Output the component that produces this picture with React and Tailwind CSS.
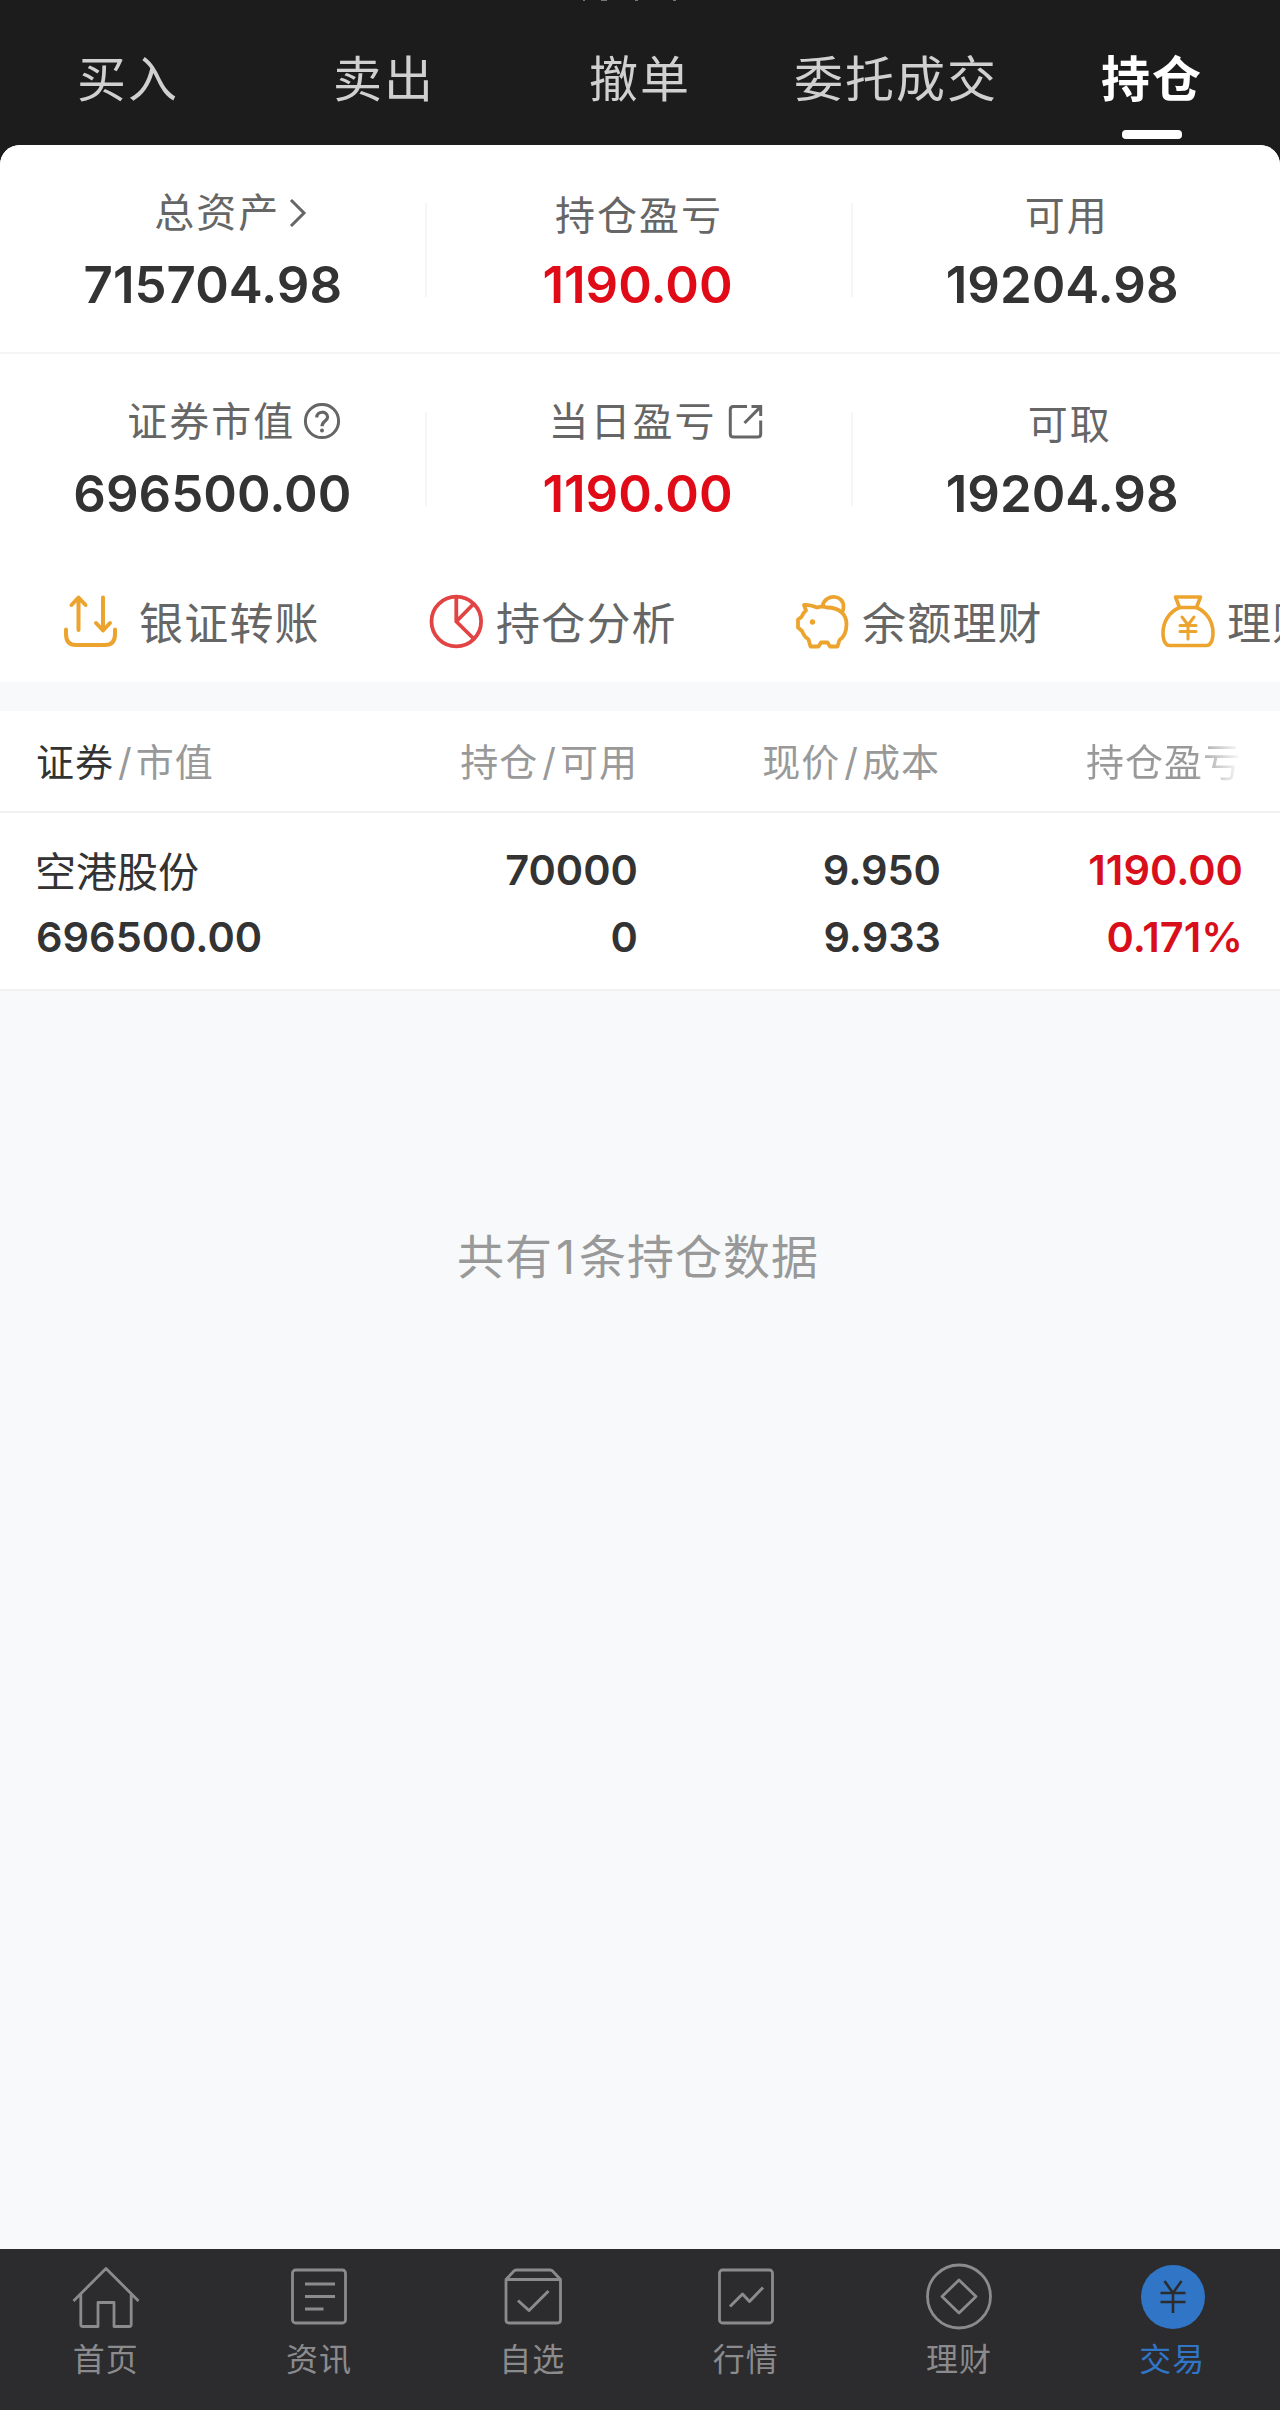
import { useState } from "react";

const tabs = ["买入", "卖出", "撤单", "委托成交", "持仓"];

const summary = [
  [
    { label: "总资产", value: "715704.98", icon: "chevron", labelPos: "mt-[38px] pl-[37px]", valuePos: "mt-[12px] pl-[1px]" },
    { label: "持仓盈亏", value: "1190.00", red: true, labelPos: "mt-[41px]", valuePos: "mt-[9px] pr-[3px]" },
    { label: "可用", value: "19204.98", labelPos: "mt-[41px]", valuePos: "mt-[9px] pr-[9px]" },
  ],
  [
    { label: "证券市值", value: "696500.00", icon: "help", labelPos: "mt-[38px] pl-[44px]", valuePos: "mt-[12px]" },
    { label: "当日盈亏", value: "1190.00", red: true, icon: "share", labelPos: "mt-[38px] pl-[34px]", valuePos: "mt-[12px] pr-[3px]" },
    { label: "可取", value: "19204.98", labelPos: "mt-[41px] pl-[6px]", valuePos: "mt-[9px] pr-[9px]" },
  ],
];

const holdings = [
  {
    name: "空港股份",
    marketValue: "696500.00",
    amount: "70000",
    available: "0",
    price: "9.950",
    cost: "9.933",
    profit: "1190.00",
    rate: "0.171%",
  },
];

function LabelIcon({ type }) {
  if (type === "chevron") {
    return (
      <svg className="ml-[9px] h-[30px] w-[18px]" viewBox="0 0 18 30" fill="none" stroke="#666" strokeWidth="3">
        <path d="M2 2 L15 15 L2 28" />
      </svg>
    );
  }
  if (type === "help") {
    return (
      <svg className="ml-[8px] size-[38px]" viewBox="0 0 38 38" fill="none" stroke="#666" strokeWidth="3">
        <circle cx="19" cy="18" r="16.6" />
        <path d="M13.8 14.5 C13.8 7.5 24.6 7.6 24.6 14 C24.6 18 19 18 19 23.2" strokeWidth="3.2" />
        <circle cx="19" cy="27.5" r="2" fill="#666" stroke="none" />
      </svg>
    );
  }
  if (type === "share") {
    return (
      <svg className="ml-[11px] size-[36px]" viewBox="0 0 36 36" fill="none" stroke="#666" strokeWidth="3">
        <path d="M20 2.5 H6.500 Q3.3 2.5 3.3 5.5 V30 Q3.3 33 6.500 33 H30.500 Q33.7 33 33.7 30 V16.500" />
        <path d="M17.500 19 L33 3.400 M24.500 2.500 H33.700 V12" />
      </svg>
    );
  }
  return null;
}

function TransferIcon() {
  return (
    <svg className="size-[56px]" viewBox="0 0 56 56" fill="none" stroke="#eca42f" strokeWidth="4" strokeLinecap="round" strokeLinejoin="round">
      <path d="M16.500 37 V5 M9.500 12 L16.500 4.500 L23.500 12" />
      <path d="M41 4.500 V37 M34 30 L41 37.500 L48 30" />
      <path d="M4 36.500 V41 Q4 52 14 52 H43 Q53 52 53 41 V36.500" />
    </svg>
  );
}

function PieIcon() {
  return (
    <svg className="size-[56px]" viewBox="0 0 56 56" fill="none" stroke="#e24444" strokeWidth="3.800">
      <circle cx="28.300" cy="28.500" r="24.800" />
      <path d="M28.300 3.500 V28.500 L46 46 M28.300 28.500 L45.500 11" />
    </svg>
  );
}

function PigIcon() {
  return (
    <svg className="size-[56px]" viewBox="0 0 56 56" fill="none" stroke="#eca42f" strokeWidth="3.800" strokeLinejoin="round">
      <path d="M10 12 C15 11.500 19 13 23 14.500 C26 13.500 30 13.500 33 14.500 C45 14.500 52.500 21 52.500 31 C52.500 39 50 44 45.500 47 L43.500 53.500 H36 L33.500 49.500 H27 L24.500 53.500 H16.500 L14.500 46.500 C11 44 9 41 8 38 L4 34.500 V26.500 L7.500 24 C8.500 21 10 19 12 17.500 Z" />
      <path d="M28.500 13 C31 0.500 50 1 49.500 14 C49.500 16 49 18 48 20" />
      <circle cx="18.500" cy="29" r="2.700" fill="#eca42f" stroke="none" />
    </svg>
  );
}

function MoneyBagIcon() {
  return (
    <svg className="size-[56px]" viewBox="0 0 56 56" fill="none" stroke="#eca42f" strokeWidth="3.600" strokeLinejoin="round" strokeLinecap="round">
      <path d="M15.500 4 H40.500 L36.500 14.500 H19.500 Z" />
      <path d="M19.500 14.500 C9 19 3 29 3 40 C3 46 4 49 6.500 51.500 Q8 52.500 10 52.500 H46 Q48 52.500 49.500 51.500 C52 49 53 46 53 40 C53 29 47 19 36.500 14.500" />
      <path d="M22 24 L28 32 L34 24 M28 32 V46 M20 32.500 H36 M20 38.500 H36" strokeWidth="3" />
    </svg>
  );
}

const actions = [
  { label: "银证转账", Icon: TransferIcon, gap: "gap-[21px]" },
  { label: "持仓分析", Icon: PieIcon, gap: "gap-[12px]" },
  { label: "余额理财", Icon: PigIcon, gap: "gap-[12px]" },
  { label: "理财产品", Icon: MoneyBagIcon, gap: "gap-[11px]" },
];

function NavIcon({ type }) {
  if (type === "trade") {
    return (
      <svg className="size-[68px]" viewBox="0 0 68 68" fill="none" stroke="#2c2c2e" strokeWidth="2.600">
        <circle cx="34" cy="34" r="32" fill="#3075c6" stroke="none" />
        <path d="M25.500 18 L34 30 L42.500 18 M34 30 V50 M21.500 30 H46.500 M21.500 39 H46.500" />
      </svg>
    );
  }
  return (
    <svg className="size-[68px]" viewBox="0 0 68 68" fill="none" stroke="#8b8b8d" strokeWidth="2.800" strokeLinejoin="round">
      {type === "home" && (
        <path d="M1.500 38 L34 5.500 L66.500 38 M8.800 31 V61.500 Q8.800 63.500 10.800 63.500 H26 V39.500 H42 V63.500 H57.200 Q59.200 63.500 59.200 61.500 V31" />
      )}
      {type === "news" && (
        <>
          <rect x="7.500" y="7" width="53" height="53" rx="3" />
          <path d="M20 21 H50 M20 33.500 H50 M20 46 H38.500" strokeWidth="3" />
        </>
      )}
      {type === "picks" && (
        <>
          <path d="M7 16.500 L14.500 8.500 Q15.500 7 17.500 7 H51 Q53 7 54 8.500 L61.500 16.500 V57 Q61.500 60 58.500 60 H10 Q7 60 7 57 Z M7 16.500 H61.500" />
          <path d="M19 37.500 L30 47.500 L49.500 28" strokeWidth="3" />
        </>
      )}
      {type === "market" && (
        <>
          <rect x="7.500" y="7" width="53" height="53" rx="3" />
          <path d="M18 43.500 L30.500 31 L37.500 38.500 L51 24.500" strokeWidth="3" />
        </>
      )}
      {type === "wealth" && (
        <>
          <circle cx="34" cy="33.500" r="31.500" />
          <path d="M34 17 L51 33.500 L34 50 L17 33.500 Z" />
        </>
      )}
    </svg>
  );
}

const navItems = [
  { label: "首页", type: "home" },
  { label: "资讯", type: "news" },
  { label: "自选", type: "picks" },
  { label: "行情", type: "market" },
  { label: "理财", type: "wealth" },
  { label: "交易", type: "trade" },
];

function Slash() {
  return <span className="mr-[3px] ml-[4px]">/</span>;
}

export default function App() {
  const [activeTab, setActiveTab] = useState("持仓");
  const [activeNav, setActiveNav] = useState("trade");

  return (
    <div className="flex h-[2410px] w-[1280px] flex-col overflow-hidden bg-[#f7f9fb] font-['Inter','Noto_Sans_CJK_SC',sans-serif] text-[#333]">
      <header className="relative bg-[#1c1c1c]">
        {/* bottom edge of the title bar scrolled off the top */}
        <svg className="absolute top-0 left-[580px] h-[2px] w-[100px]" viewBox="0 0 100 2" fill="#777">
          <path d="M3 0 h2 v1 h-2 Z M21 0 h6 v1 h-6 Z M55 0 h3 v1 h-3 Z M93 0 h3 v1 h-3 Z" />
        </svg>
        <nav className="grid h-[145px] grid-cols-5">
          {tabs.map((tab) => (
            <button
              key={tab}
              onClick={() => setActiveTab(tab)}
              className={`flex flex-col items-center pt-[45px] text-[49px] leading-[70px] tracking-[2px] ${
                activeTab === tab ? "font-semibold text-white" : "text-[#d0d0d0]"
              }`}
            >
              {tab}
              {activeTab === tab && <span className="mt-[15px] h-[9px] w-[60px] rounded-[4px] bg-white" />}
            </button>
          ))}
        </nav>
        <div className="h-[20px] rounded-t-[20px] bg-white" />
      </header>

      <section className="relative -mt-[20px] shrink-0 rounded-t-[20px] bg-white">
        {summary.map((row, i) => (
          <div key={i} className={`grid grid-cols-3 ${i === 0 ? "h-[209px] border-b-2 border-[#f5f5f5]" : "h-[206px]"}`}>
            {row.map((item, j) => (
              <div key={item.label} className="flex items-start">
                <div className="flex flex-1 flex-col items-center">
                  <div className={`flex h-[60px] items-center text-[40px] leading-[60px] tracking-[2px] text-[#666] ${item.labelPos}`}>
                    <span>{item.label}</span>
                    <LabelIcon type={item.icon} />
                  </div>
                  <div
                    className={`flex h-[60px] items-center text-[51px] font-semibold ${item.valuePos} ${
                      item.red ? "text-[#e10b17]" : "text-[#333]"
                    }`}
                  >
                    {item.value}
                  </div>
                </div>
                {j < 2 && <div className="mt-[58px] h-[94px] w-[2px] bg-[#f6f6f6]" />}
              </div>
            ))}
          </div>
        ))}
      </section>

      <section className="flex h-[122px] shrink-0 items-start overflow-hidden bg-white pt-[33px] pl-[62px]">
        {actions.map(({ label, Icon, gap }) => (
          <button key={label} className={`flex w-[366px] shrink-0 items-center ${gap}`}>
            <Icon />
            <span className="mt-[3px] -mb-[3px] text-[44px] leading-[56px] tracking-[1.200px] whitespace-nowrap text-[#666]">
              {label}
            </span>
          </button>
        ))}
      </section>

      <section className="mt-[29px] shrink-0 border-b-2 border-[#f2f2f2] bg-white">
        <div className="grid h-[102px] grid-cols-[338px_300px_302px_302px] items-center border-b-2 border-[#f2f2f2] pt-[2px] text-[38px] tracking-[1px] text-[#999]">
          <div className="pl-[36px]">
            <span className="text-[#333]">证券</span>
            <Slash />
            市值
          </div>
          <div className="text-right">
            持仓
            <Slash />
            可用
          </div>
          <div className="text-right">
            现价
            <Slash />
            成本
          </div>
          <div className="bg-linear-to-r from-[#999] from-84% to-white to-100% bg-clip-text text-right text-transparent">
            持仓盈亏
          </div>
        </div>
        {holdings.map((h) => (
          <div
            key={h.name}
            className="grid h-[176px] grid-cols-[338px_300px_303px_302px] pt-[24px] text-[41.500px] leading-[67px] font-semibold"
          >
            <div className="pl-[36px]">
              <div className="-ml-px pt-[2px] -mb-[2px] text-[41px] font-normal">{h.name}</div>
              <div>{h.marketValue}</div>
            </div>
            <div className="text-right">
              <div>{h.amount}</div>
              <div>{h.available}</div>
            </div>
            <div className="text-right">
              <div>{h.price}</div>
              <div>{h.cost}</div>
            </div>
            <div className="text-right text-[#d80f1b]">
              <div>{h.profit}</div>
              <div>{h.rate}</div>
            </div>
          </div>
        ))}
      </section>

      <p className="flex-1 pt-[231px] pr-[4px] text-center text-[47px] leading-[70px] tracking-[1px] text-[#999]">
        共有<span className="mx-[3px]">{holdings.length}</span>条持仓数据
      </p>

      <footer className="grid h-[161px] shrink-0 grid-cols-6 bg-[#2c2c2e] pt-[14px]">
        {navItems.map((item) => (
          <button
            key={item.type}
            onClick={() => setActiveNav(item.type)}
            className={`flex flex-col items-center pr-[1px] text-[32px] leading-[40px] tracking-[1px] ${
              activeNav === item.type ? "text-[#3075c6]" : "text-[#8b8b8d]"
            }`}
          >
            <NavIcon type={item.type} />
            <span className="mt-[9px] pr-[1px]">{item.label}</span>
          </button>
        ))}
      </footer>
    </div>
  );
}
